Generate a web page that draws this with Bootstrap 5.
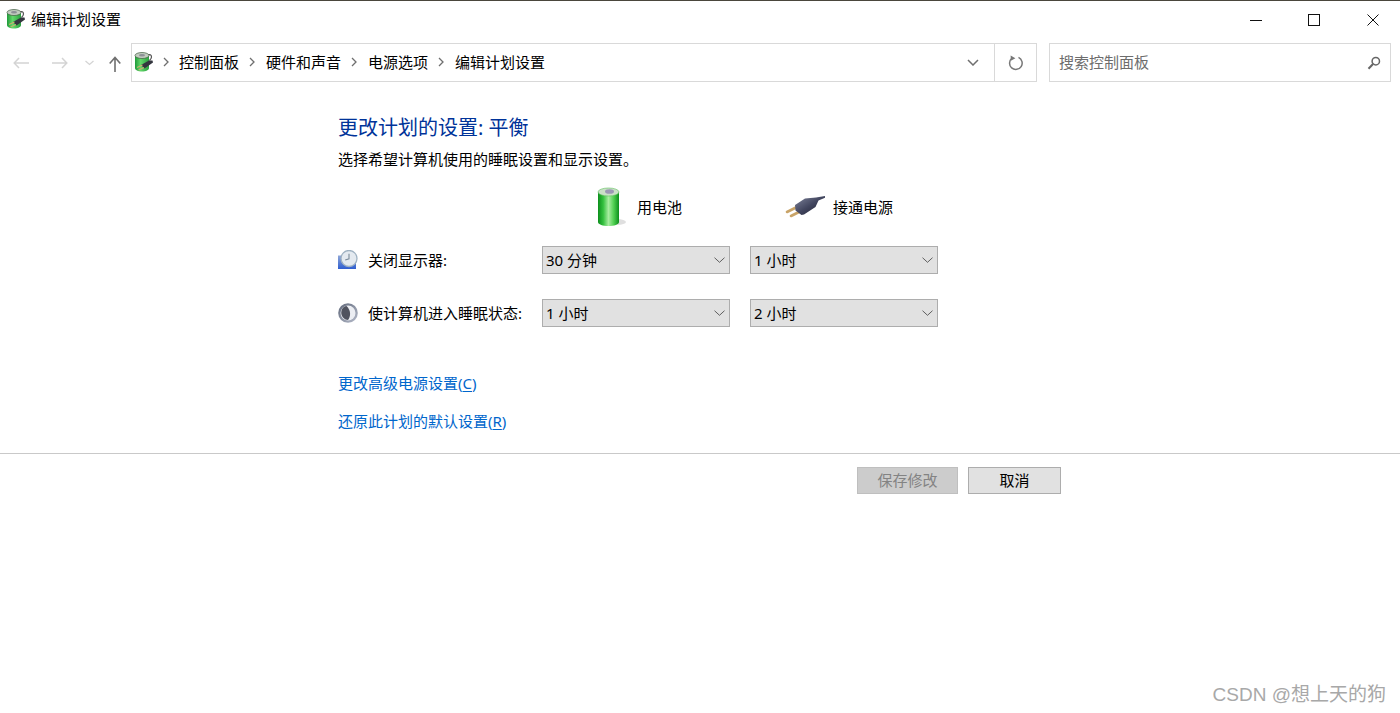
<!DOCTYPE html>
<html lang="zh-CN">
<head>
    <meta charset="UTF-8">
    <meta name="viewport" content="width=device-width, initial-scale=1.0">
    <title>编辑计划设置</title>
    <link href="https://cdn.jsdelivr.net/npm/bootstrap@5.3.0/dist/css/bootstrap.min.css" rel="stylesheet">
    <style>
        html, body { height: 100%; }
        body { font-family: "Noto Sans", "Noto Sans CJK SC", sans-serif; font-size: 15px; color: #000; background: #fff; overflow: hidden; }
        .win-root { position: relative; height: 713px; border-top: 1px solid #4a463c; }
        .title-row { height: 35px; padding-left: 6px; }
        .title-text { margin-left: 5px; line-height: 20px; }
        .win-btns { margin-right: -2px; }
        .win-btn { width: 58.5px; height: 35px; background: none; border: 0; padding: 0; }
        .addr-row { height: 39px; margin-top: 7px; padding-right: 9px; }
        .nav-btns { width: 131px; padding-left: 13px; }
        .nav-btns svg { display: block; }
        .nav-fwd { margin-left: 23px; }
        .nav-down { margin-left: 17px; }
        .nav-up { margin-left: 15px; margin-top: 3px; }
        .addr-box { flex: 0 0 906px; height: 39px; border: 1px solid #d9d9d9; }
        .crumbs { padding: 0 0 1px 2px; }
        .crumb-sep { margin: 0 11px 0 10px; }
        .crumb-first { margin: 0 10px 0 9px; }
        .crumb-text { line-height: 20px; white-space: nowrap; }
        .addr-drop { width: 42px; }
        .addr-refresh { width: 42px; height: 100%; border-left: 1px solid #d9d9d9; }
        .search-box { flex: 0 0 342px; height: 39px; margin-left: 12px; border: 1px solid #d9d9d9; padding: 0 9px; color: #6d6d6d; font-size: 15px; }
        .plan-body { padding-left: 338px; }
        .plan-title { margin: 32px 0 0; font-size: 20px; font-weight: 400; line-height: 28px; color: #003399; }
        .plan-sub { margin: 7px 0 0; line-height: 20px; font-size: 15px; }
        .plan-grid { display: grid; grid-template-columns: 184px 188px 188px; column-gap: 20px; margin-top: 15px; }
        .col-head { height: 46px; margin-bottom: 16px; font-size: 15px; }
        .head-bat { padding-left: 55px; gap: 10px; }
        .head-plug { padding-left: 34px; gap: 7px; }
        .row-label { height: 28px; white-space: nowrap; font-size: 15px; }
        .row-label svg { margin-right: 9px; flex: none; }
        .plan-select.form-select { height: 28px; padding: 0 24px 0 3px; border: 1px solid #adadad; border-radius: 0; background-color: #e1e1e1; font-size: 15px; color: #000; line-height: 26px; background-image: url("data:image/svg+xml,%3csvg xmlns='http://www.w3.org/2000/svg' viewBox='0 0 11 6'%3e%3cpath fill='none' stroke='%23505050' stroke-width='.9' d='M.5.700 5.500 5.300 10.500.700'/%3e%3c/svg%3e"); background-position: right 4px center; background-size: 11px 6px; font-family: "Noto Sans", "Noto Sans CJK SC", sans-serif; }
        .gap-row { height: 25px; grid-column: 1 / -1; }
        .plan-links { margin-top: 46px; }
        .plan-links a { display: block; height: 20px; line-height: 20px; margin-bottom: 18px; color: #0066cc; text-decoration: none; font-size: 15px; width: max-content; }
        .plan-links u { text-underline-offset: 2px; }
        .foot-rule { margin: 22px 0 0; border: 0; border-top: 1px solid #c9c9c9; opacity: 1; }
        .foot-btns { padding: 13px 0 0 857px; gap: 10px; }
        .foot-btns .btn { height: 27px; padding: 0; border-radius: 0; font-size: 15px; line-height: 23px; border: 1px solid #adadad; background: #e1e1e1; color: #000; }
        .foot-btns .btn-save { width: 101px; background: #cccccc; border-color: #bfbfbf; color: #838383; opacity: 1; }
        .foot-btns .btn-cancel { width: 93px; }
        .watermark { position: absolute; right: 14px; top: 681px; color: #a8a8a8; font-size: 19px; line-height: 26px; font-family: "Liberation Sans", "Noto Sans CJK SC", sans-serif; }
    </style>
</head>
<body>
    <svg width="0" height="0" style="position:absolute">
        <defs>
            <linearGradient id="cupGreen" x1="0" x2="1" y1="0" y2="0">
                <stop offset="0" stop-color="#1f9a3a"/><stop offset=".4" stop-color="#63d86a"/><stop offset="1" stop-color="#2aa040"/>
            </linearGradient>
            <linearGradient id="batGreen" x1="0" x2="1" y1="0" y2="0">
                <stop offset="0" stop-color="#0c8f1c"/><stop offset=".25" stop-color="#35c13f"/><stop offset=".5" stop-color="#a8eda0"/><stop offset=".75" stop-color="#4fcf50"/><stop offset="1" stop-color="#0c8f1c"/>
            </linearGradient>
            <linearGradient id="plugBody" x1="0" x2="1" y1="0" y2="1">
                <stop offset="0" stop-color="#80859c"/><stop offset=".5" stop-color="#42465f"/><stop offset="1" stop-color="#1a1b28"/>
            </linearGradient>
            <linearGradient id="clockBox" x1="0" x2="0" y1="0" y2="1">
                <stop offset="0" stop-color="#8ea7d8"/><stop offset="1" stop-color="#2f5ed0"/>
            </linearGradient>
            <linearGradient id="moonRim" x1="0" x2="1" y1="0" y2="1">
                <stop offset="0" stop-color="#5e6678"/><stop offset="1" stop-color="#b7bdcc"/>
            </linearGradient>
            <symbol id="powerIcon" viewBox="0 0 20 20">
                <path d="M13 3.500c3-2 4.500-.5 4.500 1.500 0 1.500-1 2.500-2 3.500" fill="none" stroke="#555" stroke-width="1.200"/>
                <path d="M1 4v12c0 2 3 3.500 7 3.500s7-1.500 7-3.500V4z" fill="url(#cupGreen)"/>
                <ellipse cx="8" cy="3.500" rx="7" ry="3" fill="#c2cbbf" stroke="#3d5a3d" stroke-width=".7"/>
                <ellipse cx="8" cy="3.200" rx="3" ry="1.300" fill="#8c8f96"/>
                <path d="M7 13l8-4.500 3.500 0 .5 2-8.500 6z" fill="#34363f"/>
                <path d="M3 15.500l5.500-2.500M4.500 18l5.500-2.500" stroke="#c7b070" stroke-width="1.300"/>
            </symbol>
        </defs>
    </svg>

    <div class="win-root">
        <!-- title bar -->
        <div class="title-row d-flex align-items-center">
            <svg width="20" height="20"><use href="#powerIcon"/></svg>
            <span class="title-text flex-grow-1">编辑计划设置</span>
            <div class="win-btns d-flex">
                <button class="win-btn" type="button" aria-label="minimize"><svg width="12" height="12"><path d="M0 6.500h12" stroke="#111"/></svg></button>
                <button class="win-btn" type="button" aria-label="maximize"><svg width="12" height="12"><rect x=".5" y=".5" width="11" height="11" fill="none" stroke="#111"/></svg></button>
                <button class="win-btn" type="button" aria-label="close"><svg width="12" height="12"><path d="M.5.500l11 11M11.500.500l-11 11" stroke="#111"/></svg></button>
            </div>
        </div>

        <!-- address bar -->
        <div class="addr-row d-flex">
            <div class="nav-btns d-flex align-items-center">
                <svg width="16" height="12"><path d="M1 6h15M6 1L1.200 6 6 11" fill="none" stroke="#d4d4d4" stroke-width="1.500"/></svg>
                <svg class="nav-fwd" width="16" height="12"><path d="M0 6h15M10 1l4.800 5L10 11" fill="none" stroke="#d4d4d4" stroke-width="1.500"/></svg>
                <svg class="nav-down" width="9" height="6"><path d="M.5 1l4 3.500L8.500 1" fill="none" stroke="#d4d4d4" stroke-width="1.300"/></svg>
                <svg class="nav-up" width="12" height="16"><path d="M6 16V2M.7 7.500L6 1.500l5.300 6" fill="none" stroke="#6f6f6f" stroke-width="1.600"/></svg>
            </div>
            <div class="addr-box d-flex align-items-center">
                <div class="crumbs d-flex align-items-center flex-grow-1">
                    <svg width="20" height="20"><use href="#powerIcon"/></svg>
                    <svg class="crumb-first" width="6" height="10"><path d="M1 1l4 4-4 4" fill="none" stroke="#6f6f6f" stroke-width="1.300"/></svg>
                    <span class="crumb-text">控制面板</span>
                    <svg class="crumb-sep" width="6" height="10"><path d="M1 1l4 4-4 4" fill="none" stroke="#6f6f6f" stroke-width="1.300"/></svg>
                    <span class="crumb-text">硬件和声音</span>
                    <svg class="crumb-sep" width="6" height="10"><path d="M1 1l4 4-4 4" fill="none" stroke="#6f6f6f" stroke-width="1.300"/></svg>
                    <span class="crumb-text">电源选项</span>
                    <svg class="crumb-sep" width="6" height="10"><path d="M1 1l4 4-4 4" fill="none" stroke="#6f6f6f" stroke-width="1.300"/></svg>
                    <span class="crumb-text">编辑计划设置</span>
                </div>
                <div class="addr-drop d-flex justify-content-center"><svg width="12" height="7"><path d="M1 1l5 5 5-5" fill="none" stroke="#6f6f6f" stroke-width="1.500"/></svg></div>
                <div class="addr-refresh d-flex align-items-center justify-content-center">
                    <svg width="16" height="16" viewBox="0 0 16 16"><path d="M10.500 2.400A6.300 6.300 0 1 1 3.800 3.300" fill="none" stroke="#777" stroke-width="1.500"/><path d="M2.600.600l.3 5.200 4.500-2.600z" fill="#777"/></svg>
                </div>
            </div>
            <div class="search-box d-flex align-items-center justify-content-between">
                <span>搜索控制面板</span>
                <svg width="14" height="14" viewBox="0 0 14 14"><circle cx="8.800" cy="5.200" r="3.700" fill="none" stroke="#666" stroke-width="1.500"/><path d="M6 8L1.500 12.800" stroke="#666" stroke-width="2"/></svg>
            </div>
        </div>

        <!-- plan settings -->
        <div class="plan-body">
            <h1 class="plan-title">更改计划的设置: 平衡</h1>
            <p class="plan-sub">选择希望计算机使用的睡眠设置和显示设置。</p>
            <div class="plan-grid">
                <div></div>
                <div class="col-head head-bat d-flex align-items-center">
                    <svg width="30" height="40" viewBox="0 0 30 40">
                        <ellipse cx="20" cy="35" rx="9" ry="3" fill="#c4c4c4" opacity=".55"/>
                        <path d="M1 5v30c0 2.500 5 4 10.500 4S22 37.500 22 35V5z" fill="url(#batGreen)"/>
                        <ellipse cx="11.500" cy="5" rx="10.500" ry="4" fill="#c9e0c6" stroke="#5fbf5e" stroke-width=".6"/>
                        <ellipse cx="12.500" cy="4.500" rx="4.500" ry="2.300" fill="#9c98b4"/>
                    </svg>
                    <span>用电池</span>
                </div>
                <div class="col-head head-plug d-flex align-items-center">
                    <svg width="42" height="26" viewBox="4 2 42 26">
                        <path d="M7 20l10-5M11 24l10-5" stroke="#c9a468" stroke-width="2.600" stroke-linecap="round"/>
                        <path d="M15 13l10-6.500 11-1 9-1.500v1.800l-6.500 2.700-3 6.500-11.500 7.500-2.500.500-6-4.500z" fill="url(#plugBody)"/>
                    </svg>
                    <span>接通电源</span>
                </div>

                <label class="row-label d-flex align-items-center">
                    <svg width="21" height="20" viewBox="0 0 21 20">
                        <path d="M0 5.500h18V19H0z" fill="url(#clockBox)"/>
                        <circle cx="11" cy="8.500" r="8" fill="#e4eaf0" stroke="#9fb2c2" stroke-width="1.300"/>
                        <path d="M11 3.800v5l-3.800 1.300" fill="none" stroke="#7a8a9a" stroke-width="1.100"/>
                    </svg>
                    关闭显示器:
                </label>
                <select class="plan-select form-select"><option>30 分钟</option></select>
                <select class="plan-select form-select"><option>1 小时</option></select>

                <div class="gap-row"></div>

                <label class="row-label d-flex align-items-center">
                    <svg width="21" height="20" viewBox="0 0 21 20">
                        <circle cx="10" cy="10" r="9.800" fill="url(#moonRim)"/>
                        <circle cx="10" cy="10" r="7.500" fill="#eceef3"/>
                        <path d="M8.500 3C4.500 3.500 3 7 3.300 10.500 3.700 14 6.500 16.800 10 17c2.500-3 3.500-9.500-1.500-14z" fill="#50535f"/>
                    </svg>
                    使计算机进入睡眠状态:
                </label>
                <select class="plan-select form-select"><option>1 小时</option></select>
                <select class="plan-select form-select"><option>2 小时</option></select>
            </div>

            <div class="plan-links">
                <a href="#">更改高级电源设置(<u>C</u>)</a>
                <a href="#">还原此计划的默认设置(<u>R</u>)</a>
            </div>
        </div>

        <hr class="foot-rule">
        <div class="foot-btns d-flex">
            <button class="btn btn-save" type="button" disabled>保存修改</button>
            <button class="btn btn-cancel" type="button">取消</button>
        </div>

        <div class="watermark">CSDN @想上天的狗</div>
    </div>
</body>
</html>
